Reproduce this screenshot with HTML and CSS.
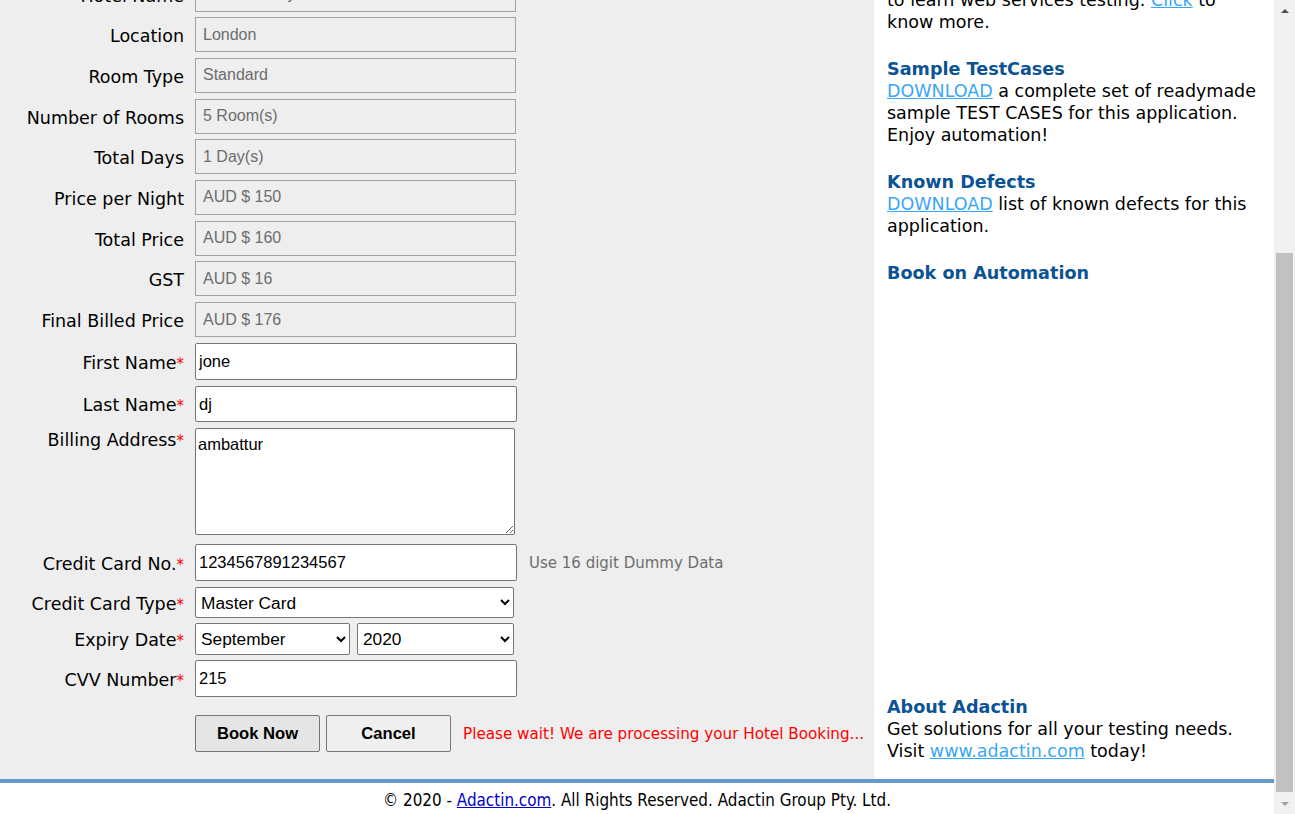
FILE: index.html
```html
<!DOCTYPE html>
<html lang="en">
<head>
<meta charset="utf-8">
<title>Adactin.com - Book A Hotel</title>
<link rel="stylesheet" href="styles.css">
</head>
<body>
<div class="window">
  <div class="viewport">
    <div class="main">
      <div class="content">
        <form class="booking">
          <div class="row ro-row">
            <label class="lbl">Hotel Name</label>
            <input class="field ro" value="Hotel Hervey" readonly>
          </div>
          <div class="row ro-row">
            <label class="lbl">Location</label>
            <input class="field ro" value="London" readonly>
          </div>
          <div class="row ro-row">
            <label class="lbl">Room Type</label>
            <input class="field ro" value="Standard" readonly>
          </div>
          <div class="row ro-row">
            <label class="lbl">Number of Rooms</label>
            <input class="field ro" value="5 Room(s)" readonly>
          </div>
          <div class="row ro-row">
            <label class="lbl">Total Days</label>
            <input class="field ro" value="1 Day(s)" readonly>
          </div>
          <div class="row ro-row">
            <label class="lbl">Price per Night</label>
            <input class="field ro" value="AUD $ 150" readonly>
          </div>
          <div class="row ro-row">
            <label class="lbl">Total Price</label>
            <input class="field ro" value="AUD $ 160" readonly>
          </div>
          <div class="row ro-row">
            <label class="lbl">GST</label>
            <input class="field ro" value="AUD $ 16" readonly>
          </div>
          <div class="row ro-row last-ro">
            <label class="lbl">Final Billed Price</label>
            <input class="field ro" value="AUD $ 176" readonly>
          </div>
          <div class="row r-first">
            <label class="lbl">First Name<span class="req">*</span></label>
            <input class="field edit" value="jone">
          </div>
          <div class="row r-last">
            <label class="lbl">Last Name<span class="req">*</span></label>
            <input class="field edit h36" value="dj">
          </div>
          <div class="row r-addr top">
            <label class="lbl lbl-top">Billing Address<span class="req">*</span></label>
            <textarea class="area">ambattur</textarea>
          </div>
          <div class="row r-cc">
            <label class="lbl">Credit Card No.<span class="req">*</span></label>
            <input class="field edit" value="1234567891234567">
            <span class="hint">Use 16 digit Dummy Data</span>
          </div>
          <div class="row r-type">
            <label class="lbl">Credit Card Type<span class="req">*</span></label>
            <select class="sel sel-wide">
              <option>Master Card</option>
            </select>
          </div>
          <div class="row r-exp">
            <label class="lbl">Expiry Date<span class="req">*</span></label>
            <div class="exp">
              <select class="sel sel-month"><option>September</option></select>
              <select class="sel sel-year"><option>2020</option></select>
            </div>
          </div>
          <div class="row r-cvv">
            <label class="lbl">CVV Number<span class="req">*</span></label>
            <input class="field edit" value="215">
          </div>
          <div class="row r-btn">
            <span class="lbl"></span>
            <div class="btns">
              <button type="button" class="btn btn-book">Book Now</button>
              <button type="button" class="btn btn-cancel">Cancel</button>
              <span class="wait">Please wait! We are processing your Hotel Booking...</span>
            </div>
          </div>
        </form>
      </div>
      <aside class="sidebar">
        <div class="block">
          <p>Adactin now offers a free practice application<br>to learn web services testing. <a href="#">Click</a> to know more.</p>
        </div>
        <div class="block">
          <h3 class="side-h">Sample TestCases</h3>
          <p><a href="#">DOWNLOAD</a> a complete set of readymade sample TEST CASES for this application. Enjoy automation!</p>
        </div>
        <div class="block">
          <h3 class="side-h">Known Defects</h3>
          <p><a href="#">DOWNLOAD</a> list of known defects for this application.</p>
        </div>
        <div class="block">
          <h3 class="side-h">Book on Automation</h3>
          <div class="book-space"></div>
        </div>
        <div class="block">
          <h3 class="side-h">About Adactin</h3>
          <p>Get solutions for all your testing needs. Visit <a href="#">www.adactin.com</a> today!</p>
        </div>
      </aside>
    </div>
    <footer class="footer">© 2020 - <a href="#">Adactin.com</a>. All Rights Reserved. Adactin Group Pty. Ltd.</footer>
  </div>
  <div class="scrollbar">
    <div class="sb-up"></div>
    <div class="sb-track"><div class="sb-thumb"></div></div>
    <div class="sb-down"></div>
  </div>
</div>
</body>
</html>
```
FILE: styles.css
```css
html, body {
  margin: 0;
  padding: 0;
  height: 100%;
  overflow: hidden;
}
body {
  font-family: "DejaVu Sans", Verdana, sans-serif;
  color: #000;
}
.window {
  display: flex;
  height: 100vh;
}
.viewport {
  flex: 1;
  min-width: 0;
  display: flex;
  flex-direction: column;
}
.main {
  flex: 1;
  min-height: 0;
  display: flex;
  overflow: hidden;
}
.content {
  width: 874px;
  flex: none;
  background: #eeeeee;
  display: flex;
  flex-direction: column;
  justify-content: flex-end;
  padding-bottom: 27px;
  box-sizing: border-box;
  overflow: hidden;
}
.booking {
  display: flex;
  flex-direction: column;
  margin: 0;
}
.row {
  display: grid;
  grid-template-columns: 184px auto auto;
  justify-content: start;
  column-gap: 11px;
  align-items: center;
}
.ro-row { margin-bottom: 5.7px; }
.last-ro { margin-bottom: 6px; }
.r-first { margin-bottom: 6px; }
.r-last { margin-bottom: 6px; }
.r-addr { margin-bottom: 9px; align-items: start; }
.r-cc { margin-bottom: 6px; }
.r-type { margin-bottom: 5px; }
.r-exp { margin-bottom: 5px; }
.r-cvv { margin-bottom: 18px; }
.lbl {
  text-align: right;
  font-size: 17.5px;
  line-height: 21px;
  padding-top: 4px;
  white-space: nowrap;
}
.lbl-top { padding-top: 2px; }
.req { color: #f00; font-size: 15px; }
.field {
  box-sizing: border-box;
  font-family: "Liberation Sans", Arial, sans-serif;
  margin: 0;
  outline: none;
}
.ro {
  width: 321px;
  height: 35px;
  border: 1px solid #a3a3a3;
  border-radius: 0;
  background: #eeeeee;
  color: #6d6d6d;
  font-size: 16px;
  padding: 0 7px;
}
.edit {
  width: 322px;
  height: 37px;
  border: 1px solid #767676;
  border-radius: 2px;
  background: #fff;
  color: #000;
  font-size: 16.5px;
  padding: 0 3px;
}
.h36 { height: 36px; }
.area {
  box-sizing: border-box;
  width: 320px;
  height: 107px;
  margin: 0;
  border: 1px solid #767676;
  border-radius: 2px;
  padding: 6px 2px;
  font-family: "Liberation Sans", Arial, sans-serif;
  font-size: 16.5px;
  color: #000;
  background: #fff;
  resize: both;
  outline: none;
}
.hint {
  color: #6d6d6d;
  font-size: 15px;
  padding-left: 1px;
}
.sel {
  box-sizing: border-box;
  height: 31px;
  margin: 0;
  border: 1px solid #767676;
  border-radius: 2px;
  background: #fff;
  color: #000;
  font-family: "Liberation Sans", Arial, sans-serif;
  font-size: 17.3px;
  padding: 0 1px;
}
.sel-wide { width: 319px; }
.exp {
  display: flex;
  gap: 7px;
}
.sel-month { width: 155px; height: 32px; }
.sel-year { width: 157px; height: 32px; }
.btns {
  display: flex;
  align-items: center;
  gap: 6px;
}
.btn {
  box-sizing: border-box;
  width: 125px;
  height: 37px;
  margin: 0;
  border: 1px solid #767676;
  border-radius: 2px;
  font-family: "Liberation Sans", Arial, sans-serif;
  font-weight: bold;
  font-size: 16.6px;
  color: #000;
  padding: 0;
}
.btn-book { background: #e5e5e5; }
.btn-cancel { background: #efefef; }
.wait {
  color: #ff0000;
  font-size: 15.2px;
  margin-left: 6px;
  white-space: nowrap;
}
.sidebar {
  flex: 1;
  min-width: 0;
  background: #fff;
  display: flex;
  flex-direction: column;
  justify-content: flex-end;
  padding: 0 13px 17px 13px;
  box-sizing: border-box;
  overflow: hidden;
  font-size: 17.5px;
  line-height: 22px;
}
.sidebar p { margin: 0; }
.block { margin: 0 0 25px 0; width: 375px; }
.block:last-child { margin-bottom: 0; }
.side-h {
  margin: 0;
  font-size: 17.6px;
  line-height: 22px;
  font-weight: bold;
  color: #0b5394;
}
.sidebar a { color: #3aa6f7; }
.book-space { height: 387px; }
.footer {
  flex: none;
  height: 35px;
  box-sizing: border-box;
  border-top: 4px solid #6699cc;
  background: #fff;
  text-align: center;
  font-family: "DejaVu Sans Condensed", "DejaVu Sans", sans-serif;
  font-size: 16.9px;
  line-height: 31px;
  padding-top: 2px;
}
.footer a { color: #0000cc; }
.scrollbar {
  width: 21px;
  flex: none;
  background: #f1f1f1;
  display: flex;
  flex-direction: column;
  align-items: center;
}
.sb-up, .sb-down {
  height: 21px;
  flex: none;
  display: flex;
  align-items: center;
  justify-content: center;
}
.sb-up::before {
  content: "";
  border-left: 4px solid transparent;
  border-right: 4px solid transparent;
  border-bottom: 4px solid #505050;
}
.sb-down::before {
  content: "";
  border-left: 4px solid transparent;
  border-right: 4px solid transparent;
  border-top: 4px solid #a3a3a3;
}
.sb-track {
  flex: 1;
  width: 17px;
  display: flex;
  flex-direction: column;
  justify-content: flex-end;
  padding-bottom: 1px;
}
.sb-thumb {
  height: 539px;
  background: #c1c1c1;
}
```
